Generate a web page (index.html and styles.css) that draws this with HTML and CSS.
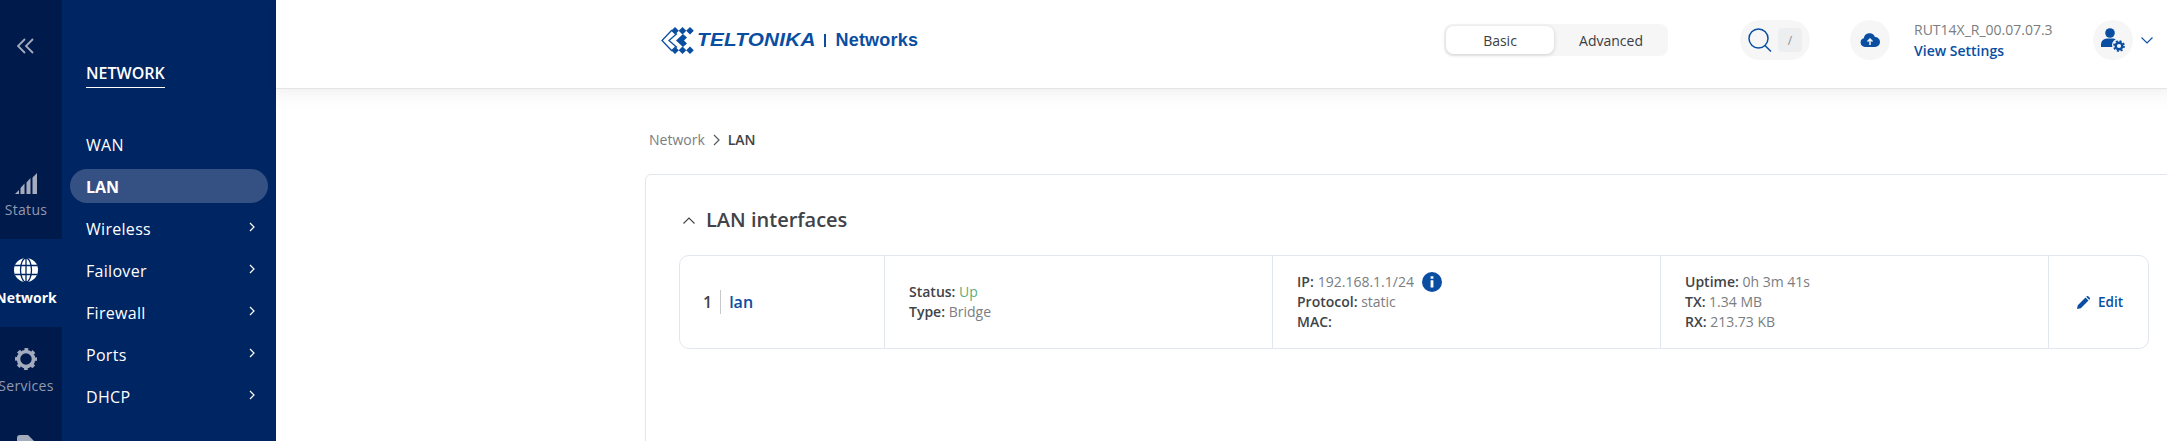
FILE: index.html
```html
<!DOCTYPE html>
<html lang="en">
<head>
<meta charset="utf-8">
<title>LAN - Teltonika Networks</title>
<link rel="stylesheet" href="styles.css">
</head>
<body>
<div class="app">
  <nav class="rail">
    <div class="rail-top">
      <svg class="collapse" width="18" height="16" viewBox="0 0 18 16"><path d="M8 1 1 8l7 7M16 1 9 8l7 7" fill="none" stroke="#a3abbd" stroke-width="1.8"/></svg>
    </div>
    <a class="rail-item">
      <svg width="22" height="24" viewBox="0 -2 22 24"><path d="M0 21 4 17v4zM5.500 21v-6l4-4.500V21zM11.500 21V9.500l4-4.500v16zM17.500 21V4.500L22 0v21z" fill="#a3abbd"/></svg>
      <span>Status</span>
    </a>
    <a class="rail-item active">
      <svg width="24" height="24" viewBox="0 0 24 24"><circle cx="12" cy="12" r="12" fill="#fff"/><g fill="none" stroke="#002563" stroke-width="1.300"><ellipse cx="12" cy="12" rx="5.500" ry="12"/><path d="M12 0v24M1 7.500h22M1 16.500h22"/></g></svg>
      <span>Network</span>
    </a>
    <a class="rail-item">
      <svg width="24" height="24" viewBox="0 0 24 24"><circle cx="12" cy="12" r="7.500" fill="none" stroke="#a3abbd" stroke-width="3.600"/><circle cx="12" cy="12" r="9.800" fill="none" stroke="#a3abbd" stroke-width="2.400" stroke-dasharray="3.850 3.850" stroke-dashoffset="1.925"/></svg>
      <span>Services</span>
    </a>
    <a class="rail-item">
      <svg width="20" height="24" viewBox="0 0 20 24"><path d="M1 3a3 3 0 0 1 3-3h8l7 7v17H1z" fill="#a3abbd"/></svg>
    </a>
  </nav>

  <aside class="panel">
    <div class="panel-title"><span>NETWORK</span></div>
    <ul class="menu">
      <li class="menu-item">WAN</li>
      <li class="menu-item current">LAN</li>
      <li class="menu-item">Wireless<svg class="caret" width="6" height="10" viewBox="0 0 6 10"><path d="m1 1 4 4-4 4" fill="none" stroke="#fff" stroke-width="1.200"/></svg></li>
      <li class="menu-item">Failover<svg class="caret" width="6" height="10" viewBox="0 0 6 10"><path d="m1 1 4 4-4 4" fill="none" stroke="#fff" stroke-width="1.200"/></svg></li>
      <li class="menu-item">Firewall<svg class="caret" width="6" height="10" viewBox="0 0 6 10"><path d="m1 1 4 4-4 4" fill="none" stroke="#fff" stroke-width="1.200"/></svg></li>
      <li class="menu-item">Ports<svg class="caret" width="6" height="10" viewBox="0 0 6 10"><path d="m1 1 4 4-4 4" fill="none" stroke="#fff" stroke-width="1.200"/></svg></li>
      <li class="menu-item">DHCP<svg class="caret" width="6" height="10" viewBox="0 0 6 10"><path d="m1 1 4 4-4 4" fill="none" stroke="#fff" stroke-width="1.200"/></svg></li>
    </ul>
  </aside>

  <div class="main">
    <header class="topbar">
      <div class="logo">
        <svg class="logo-mark" width="36" height="27" viewBox="0 0 36 27">
          <path d="M14 0l3.800 3.800L14 7.600l-3.800-3.800zM21.500 0l3.800 3.800-3.800 3.800-3.800-3.800zM29 0l3.800 3.800L29 7.600l-3.800-3.800zM14 19.400l3.800 3.800-3.800 3.800-3.800-3.800zM21.500 19.400l3.800 3.800-3.800 3.800-3.800-3.800zM29 19.400l3.800 3.800-3.800 3.800-3.800-3.800z" fill="#0a4ea2"/>
          <path d="M11 3 1 13.500 11 24M16 6.500 8 13.500l8 7" fill="none" stroke="#0a4ea2" stroke-width="1.300"/>
          <path d="M22 7 15 13.500l7 6.500 4-3.500-3-3 3-3z" fill="#0a4ea2"/>
        </svg>
        <span class="logo-name">TELTONIKA</span>
        <span class="logo-sep"></span>
        <span class="logo-net">Networks</span>
      </div>
      <div class="mode">
        <span class="mode-btn selected">Basic</span>
        <span class="mode-btn advanced">Advanced</span>
      </div>
      <div class="search">
        <svg width="24" height="25" viewBox="0 0 24 25"><circle cx="10.500" cy="10.500" r="9.500" fill="none" stroke="#0a4ea2" stroke-width="1.500"/><path d="m17 17.500 6 6" stroke="#0a4ea2" stroke-width="1.500"/></svg>
        <span class="slash">/</span>
      </div>
      <div class="round cloud">
        <svg width="20" height="14" viewBox="0 0 20 14"><path d="M5 14a4.500 4.500 0 0 1-1.200-8.800A5.800 5.800 0 0 1 15 4a5 5 0 0 1 0 10z" fill="#0a4ea2"/><path d="M10 12V6.500M7.500 8.500 10 6l2.500 2.500" fill="none" stroke="#f6f6f6" stroke-width="1.500"/></svg>
      </div>
      <div class="version">
        <div class="version-name">RUT14X_R_00.07.07.3</div>
        <div class="version-link">View Settings</div>
      </div>
      <div class="round user">
        <svg width="24" height="24" viewBox="0 0 24 24"><circle cx="9" cy="5" r="4.800" fill="#0a4ea2"/><path d="M0 19v-3a6 6 0 0 1 6-5.500h6c1 0 2 .3 2.800.8A6.500 6.500 0 0 0 11.500 19z" fill="#0a4ea2"/><circle cx="18" cy="18" r="3.300" fill="none" stroke="#0a4ea2" stroke-width="2.400"/><circle cx="18" cy="18" r="5" fill="none" stroke="#0a4ea2" stroke-width="1.800" stroke-dasharray="2 1.930"/></svg>
      </div>
      <svg class="user-caret" width="12" height="7" viewBox="0 0 12 7"><path d="m.5.500 5.500 5.500 5.500-5.500" fill="none" stroke="#0a4ea2" stroke-width="1.100"/></svg>
    </header>

    <main class="content">
      <div class="crumbs">
        <span class="crumb">Network</span>
        <svg width="7" height="12" viewBox="0 0 7 12"><path d="m1 1 5 5-5 5" fill="none" stroke="#55595f" stroke-width="1.200"/></svg>
        <span class="crumb-now">LAN</span>
      </div>
      <section class="card">
        <h2 class="card-title">
          <svg width="12" height="7" viewBox="0 0 12 7"><path d="m.5 6.500 5.500-5.500 5.500 5.500" fill="none" stroke="#404347" stroke-width="1.100"/></svg>
          LAN interfaces
        </h2>
        <div class="row">
          <div class="cell cell-name"><span class="num">1</span><span class="name">lan</span></div>
          <div class="cell cell-status">
            <div><b>Status:</b> <span class="up">Up</span></div>
            <div><b>Type:</b> Bridge</div>
          </div>
          <div class="cell cell-ip">
            <div class="ip-line"><b>IP:</b> 192.168.1.1/24
              <svg class="info" width="20" height="20" viewBox="0 0 20 20"><circle cx="10" cy="10" r="10" fill="#0a4ea2"/><path d="M8.600 8.200h2.800V15.500H8.600zM8.600 4.200h2.800V6.800H8.600z" fill="#fff"/></svg>
            </div>
            <div><b>Protocol:</b> static</div>
            <div><b>MAC:</b></div>
          </div>
          <div class="cell cell-up">
            <div><b>Uptime:</b> 0h 3m 41s</div>
            <div><b>TX:</b> 1.34 MB</div>
            <div><b>RX:</b> 213.73 KB</div>
          </div>
          <div class="cell cell-edit">
            <svg width="13" height="13" viewBox="0 0 13 13"><path d="M0 13l.8-3.800L8.500 1.500l3 3L3.800 12.200zM9.500.5a1.400 1.400 0 0 1 2 0l1 1a1.400 1.400 0 0 1 0 2l-.3.300-3-3z" fill="#0a4ea2"/></svg>
            <span>Edit</span>
          </div>
        </div>
      </section>
    </main>
  </div>
</div>
</body>
</html>
```

FILE: styles.css
```css
* { box-sizing: border-box; }
html, body { margin: 0; height: 100%; overflow: hidden; }
body { font-family: "Open Sans", sans-serif; font-size: 14px; color: #7a7d82; background: #fff; }
.app { display: flex; height: 441px; overflow: hidden; }

.rail { width: 62px; flex: none; background: #001a4c; overflow: hidden; display: flex; flex-direction: column; }
.rail-top { height: 151px; flex: none; padding: 38px 10px 0 0; display: flex; justify-content: center; align-items: flex-start; }
.rail-item { height: 88px; flex: none; padding: 20px 10px 0 0; display: flex; flex-direction: column; align-items: center; gap: 5px; color: #939bae; font-size: 14px; line-height: 20px; letter-spacing: .3px; }
.rail-item svg { flex: none; }
.rail-item span { white-space: nowrap; }
.rail-item.active { padding-top: 19px; gap: 6px; background: #002563; color: #fff; font-weight: 700; letter-spacing: 0; }

.panel { width: 214px; flex: none; background: #002563; color: #fff; }
.panel-title { height: 118px; padding: 61px 0 0 24px; font-size: 16px; font-weight: 600; line-height: 24px; }
.panel-title span { display: inline-block; border-bottom: 1px solid #fff; padding-bottom: 2px; line-height: 24px; }
.menu { list-style: none; margin: 9px 0 0; padding: 0 8px; }
.menu-item { height: 34px; margin-bottom: 8px; padding: 2px 16px 0; border-radius: 17px; display: flex; align-items: center; justify-content: space-between; font-size: 16px; letter-spacing: .3px; }
.menu-item.current { background: #355082; font-weight: 700; letter-spacing: 0; }
.caret { margin-right: -3px; margin-top: -4px; }

.main { flex: 1; min-width: 0; display: flex; flex-direction: column; background: #fff; }
.topbar { height: 89px; flex: none; padding-bottom: 8px; display: flex; align-items: center; background: #fff; border-bottom: 1px solid #e5e5e5; box-shadow: 0 3px 10px rgba(0, 0, 0, .04); position: relative; }
.logo { display: flex; align-items: center; margin-left: 385px; width: 260px; color: #0a4ea2; flex: none; }
.logo-mark { flex: none; }
.logo-name { display: inline-block; width: 116px; font-family: "Liberation Sans", sans-serif; font-style: italic; font-weight: 700; font-size: 18.500px; letter-spacing: .2px; transform: scaleX(1.12); transform-origin: left center; white-space: nowrap; }
.logo-sep { width: 1.500px; height: 13px; background: #0a4ea2; margin: 0 10px 0 11px; flex: none; }
.logo-net { font-family: "Liberation Sans", sans-serif; font-weight: 700; font-size: 18px; letter-spacing: .2px; }

.mode { margin-left: 523px; width: 224px; height: 32px; padding: 2px; flex: none; display: flex; background: #f6f6f6; border-radius: 8px; }
.mode-btn { flex: 1; display: flex; align-items: center; justify-content: center; color: #3a3d42; font-size: 14px; border-radius: 8px; }
.mode-btn.selected { flex: none; width: 108px; background: #fff; box-shadow: 0 1px 4px rgba(0, 0, 0, .16); }
.mode-btn.advanced { padding-left: 2px; }

.search { margin-left: 72px; width: 70px; height: 40px; padding: 0 8px 0 8px; flex: none; display: flex; align-items: center; justify-content: space-between; background: #f6f6f6; border-radius: 20px; }
.slash { width: 24px; height: 24px; display: flex; align-items: center; justify-content: center; background: #edeef0; border-radius: 4px; font-size: 12px; color: #8a8d92; }
.round { width: 40px; height: 40px; flex: none; display: flex; align-items: center; justify-content: center; background: #f6f6f6; border-radius: 50%; }
.cloud { margin-left: 40px; }
.version { margin-left: 24px; width: 179px; flex: none; line-height: 21px; }
.version-name { font-size: 14px; color: #7a7d82; white-space: nowrap; }
.version-link { font-size: 14px; font-weight: 600; color: #0a4ea2; }
.user-caret { margin-left: 8px; flex: none; }

.content { flex: 1; overflow: hidden; padding: 0 0 0 369px; background: linear-gradient(#fafafa, #fff 24px); }
.crumbs { height: 85px; padding-top: 40px; display: flex; align-items: flex-start; gap: 8px; line-height: 22px; }
.crumbs svg { margin-top: 5px; }
.crumb { padding-left: 4px; }
.crumb-now { font-weight: 600; color: #404347; }
.card { width: 1540px; height: 300px; padding: 0 33px; background: #fff; border: 1px solid #e2e6ee; border-radius: 6px 0 0 0; }
.card-title { height: 80px; margin: 0; padding: 10px 0 0 4px; display: flex; align-items: center; gap: 11px; font-size: 20px; font-weight: 600; color: #404347; line-height: 28px; }
.row { width: 1470px; height: 94px; display: flex; border: 1px solid #e2e6ee; border-radius: 10px; line-height: 20px; }
.row b { font-weight: 600; color: #404347; }
.cell { height: 100%; display: flex; flex-direction: column; justify-content: center; border-right: 1px solid #e2e6ee; padding-left: 24px; flex: none; }
.cell-name { width: 205px; flex-direction: row; align-items: center; justify-content: flex-start; padding-left: 23px; }
.num { font-size: 16px; font-weight: 600; color: #404347; padding-right: 8px; border-right: 1px solid #c6c8cc; line-height: 24px; }
.name { font-size: 16px; font-weight: 600; color: #0a4ea2; padding-left: 8px; }
.cell-status { width: 388px; }
.cell-ip { width: 388px; }
.cell-up { width: 388px; }
.cell-edit { flex: 1; flex-direction: row; align-items: center; justify-content: flex-start; gap: 8px; border-right: 0; padding-left: 28px; color: #0a4ea2; font-weight: 600; font-size: 13.500px; }
.ip-line { display: flex; align-items: center; gap: 4px; }
.info { margin-left: 4px; }
.up { color: #5cae7a; }
```
